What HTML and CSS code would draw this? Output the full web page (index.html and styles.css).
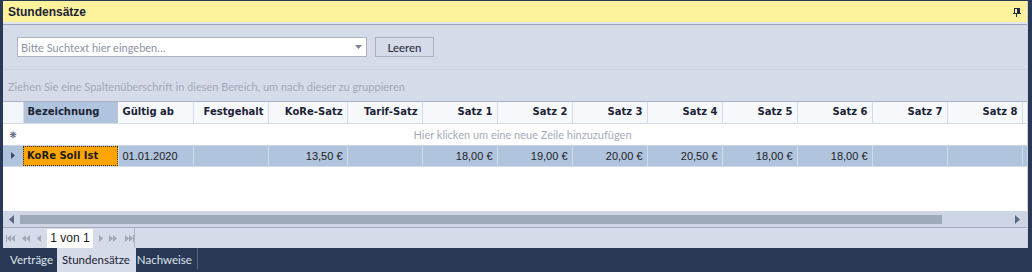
FILE: index.html
```html
<!DOCTYPE html>
<html lang="de">
<head>
<meta charset="utf-8">
<title>Stundensätze</title>
<link rel="stylesheet" href="styles.css">
</head>
<body>
<div class="app">
  <div class="panel">
    <div class="caption">
      <span class="title">Stundensätze</span>
      <svg class="pin" width="8" height="9" viewBox="0 0 8 9">
        <rect x="1.5" y="0.5" width="5" height="5" fill="none" stroke="#1f2b45"/>
        <rect x="4" y="1" width="2" height="4" fill="#1f2b45"/>
        <rect x="0" y="5" width="8" height="1" fill="#1f2b45"/>
        <rect x="3" y="6" width="1" height="3" fill="#1f2b45"/>
      </svg>
    </div>
    <div class="content">
      <div class="search-row">
        <div class="combo">
          <span class="placeholder">Bitte Suchtext hier eingeben…</span>
          <svg class="combo-arrow" width="7" height="4" viewBox="0 0 7 4"><path d="M0 0h7L3.5 4z" fill="#7a8296"/></svg>
        </div>
        <div class="btn">Leeren</div>
      </div>
      <div class="group-panel">Ziehen Sie eine Spaltenüberschrift in diesen Bereich, um nach dieser zu gruppieren</div>
      <div class="grid">
        <div class="grid-scroll">
          <table class="table">
            <colgroup>
              <col class="c-ind"><col class="c-bez"><col class="c-std"><col class="c-std"><col class="c-kore"><col class="c-std">
              <col class="c-std"><col class="c-std"><col class="c-std"><col class="c-std"><col class="c-std"><col class="c-std"><col class="c-std"><col class="c-std"><col class="c-std">
            </colgroup>
            <thead>
              <tr class="head">
                <th class="ind"></th>
                <th class="left sel">Bezeichnung</th>
                <th class="left">Gültig ab</th>
                <th>Festgehalt</th>
                <th>KoRe-Satz</th>
                <th>Tarif-Satz</th>
                <th>Satz 1</th>
                <th>Satz 2</th>
                <th>Satz 3</th>
                <th>Satz 4</th>
                <th>Satz 5</th>
                <th>Satz 6</th>
                <th>Satz 7</th>
                <th>Satz 8</th>
                <th></th>
              </tr>
            </thead>
            <tbody>
              <tr class="newrow">
                <td class="ind"><span class="star">❋</span></td>
                <td colspan="13" class="newtext">Hier klicken um eine neue Zeile hinzuzufügen</td>
                <td></td>
              </tr>
              <tr class="datarow">
                <td class="ind"><svg width="4" height="7" viewBox="0 0 4 7"><path d="M0 0l4 3.5L0 7z" fill="#3d4a66"/></svg></td>
                <td class="left focus"><span class="focus-box">KoRe Soll Ist</span></td>
                <td class="left">01.01.2020</td>
                <td></td>
                <td>13,50 €</td>
                <td></td>
                <td>18,00 €</td>
                <td>19,00 €</td>
                <td>20,00 €</td>
                <td>20,50 €</td>
                <td>18,00 €</td>
                <td>18,00 €</td>
                <td></td>
                <td></td>
                <td></td>
              </tr>
            </tbody>
          </table>
        </div>
        <div class="hscroll">
          <svg class="sarrow" width="5" height="9" viewBox="0 0 5 9"><path d="M5 0v9L0 4.5z" fill="#5b6884"/></svg>
          <div class="track"><div class="thumb"></div></div>
          <svg class="sarrow" width="5" height="9" viewBox="0 0 5 9"><path d="M0 0v9l5-4.5z" fill="#5b6884"/></svg>
        </div>
      </div>
      <div class="navigator">
        <div class="nav-box">
          <svg class="nav-ico" width="10" height="7" viewBox="0 0 10 7"><path d="M0 0h1v7H0zM1 3.5L5 0v7zM5 3.5L9 0v7z" fill="#9ea8ba"/></svg>
          <svg class="nav-ico" width="9" height="7" viewBox="0 0 9 7"><path d="M0 3.5L4 0v7zM4 3.5L8 0v7z" fill="#9ea8ba"/></svg>
          <svg class="nav-ico" width="4" height="7" viewBox="0 0 4 7"><path d="M0 3.5L4 0v7z" fill="#9ea8ba"/></svg>
          <span class="page">1 von 1</span>
          <svg class="nav-ico" width="4" height="7" viewBox="0 0 4 7"><path d="M4 3.5L0 0v7z" fill="#9ea8ba"/></svg>
          <svg class="nav-ico" width="9" height="7" viewBox="0 0 9 7"><path d="M8 3.5L4 0v7zM4 3.5L0 0v7z" fill="#9ea8ba"/></svg>
          <svg class="nav-ico" width="10" height="7" viewBox="0 0 10 7"><path d="M9 0h1v7H9zM9 3.5L5 0v7zM5 3.5L1 0v7z" fill="#9ea8ba"/></svg>
        </div>
      </div>
    </div>
  </div>
  <div class="tabs">
    <div class="tab">Verträge</div>
    <div class="tab active">Stundensätze</div>
    <div class="tab">Nachweise</div>
  </div>
</div>
</body>
</html>
```

FILE: styles.css
```css
* { box-sizing: border-box; }
html, body { margin: 0; padding: 0; }
body {
  background: #293955;
  width: 1032px;
  height: 272px;
  overflow: hidden;
  font-family: "Lato", "Liberation Sans", sans-serif;
}
.app {
  display: flex;
  flex-direction: column;
  height: 272px;
  padding-top: 1px;
}
.panel {
  margin-left: 3px;
  width: 1025px;
  border-right: 1px solid #c9d0e0;
  display: flex;
  flex-direction: column;
  background: #d5dbe8;
}
.caption {
  height: 21px;
  background: #fff29d;
  display: flex;
  align-items: center;
  justify-content: space-between;
  padding: 0 6px 0 5px;
}
.title {
  font-family: "Liberation Sans", sans-serif;
  font-weight: bold;
  font-size: 12px;
  color: #1b2235;
}
.pin { margin-top: 1px; }
.content {
  border-top: 2px solid #e0e4ef;
}
.content::before {
  content: "";
  display: block;
  height: 1px;
  background: #9ea5bd;
}
.search-row {
  display: flex;
  gap: 8px;
  padding: 12px 0 0 14px;
}
.combo {
  width: 350px;
  height: 20px;
  background: #fff;
  border: 1px solid #abb3c5;
  display: flex;
  align-items: center;
  justify-content: space-between;
  padding: 0 4px 0 3px;
}
.placeholder {
  font-size: 11px;
  color: #8c93a6;
  white-space: nowrap;
}
.btn {
  width: 59px;
  height: 20px;
  border: 1px solid #a9b1c3;
  background: #d5dbe8;
  font-size: 11.5px;
  color: #1e2538;
  display: flex;
  align-items: center;
  justify-content: center;
}
.group-panel {
  margin-top: 12px;
  border-top: 1px solid #cbd1de;
  height: 32px;
  padding: 10px 0 0 5px;
  font-size: 11px;
  color: #a2a9bb;
  white-space: nowrap;
}
.grid {
  background: #fff;
  border-top: 1px solid #a8b0c2;
  height: 127px;
  display: flex;
  flex-direction: column;
  border-bottom: 1px solid #a3abbd;
}
.grid-scroll {
  flex: 1;
  overflow: hidden;
}
.table {
  border-collapse: collapse;
  table-layout: fixed;
  width: 1094px;
  font-family: "Liberation Sans", sans-serif;
  font-size: 11px;
  color: #1c1c1c;
}
.c-ind { width: 20px; }
.c-bez { width: 95px; }
.c-std { width: 75px; }
.c-kore { width: 79px; }
.table th, .table td {
  padding: 0 4px;
  text-align: right;
  white-space: nowrap;
  overflow: hidden;
}
.table .left { text-align: left; }
.head th {
  height: 21px;
  background: #f6f8fc;
  border-right: 1px solid #d5dbe8;
  border-bottom: 1px solid #d5dbe8;
  font-family: "DejaVu Sans", sans-serif;
  font-weight: bold;
  font-size: 10px;
  color: #1b2235;
  padding-bottom: 1px;
}
.head th.sel { background: #b1c4de; border-right: 1px solid #fff; }
.head th.ind { background: #f2f5fa; }
.newrow td {
  height: 22px;
  border-bottom: 1px solid #c9d3e4;
  padding: 0;
}
.newrow .newtext {
  text-align: center;
  font-family: "Lato", sans-serif;
  font-size: 11px;
  color: #a3abbd;
}
.ind { text-align: center !important; padding: 0 !important; }
.star { font-family: "DejaVu Sans", sans-serif; font-size: 9px; color: #4b5772; }
.datarow td {
  height: 21px;
  background: #b1c4de;
  border-right: 1px solid #d2dbe9;
  border-bottom: 1px solid #d2dbe9;
}
.datarow td.ind { border-right: none; }
.datarow td.ind svg { display: block; margin: 0 auto; }
.datarow td.focus {
  padding: 0;
  background: #ffa500;
}
.focus-box {
  display: flex;
  align-items: center;
  height: 20px;
  border: 1px dotted #3a2a00;
  padding-left: 3px;
  font-family: "DejaVu Sans", sans-serif;
  font-weight: bold;
  font-size: 10px;
  color: #1b1b1b;
}
.hscroll {
  height: 16px;
  background: #ced6e6;
  display: flex;
  align-items: center;
  padding: 0 7px 0 6px;
  gap: 6px;
}
.track {
  flex: 1;
  height: 9px;
}
.thumb {
  width: 922px;
  height: 9px;
  background: #9ea9b9;
}
.navigator {
  height: 20px;
  display: flex;
}
.nav-box {
  width: 132px;
  display: flex;
  align-items: center;
  gap: 6px;
  padding-left: 3px;
  border-right: 1px solid #aeb6c7;
}
.page {
  background: #fff;
  height: 19px;
  width: 46px;
  display: flex;
  align-items: center;
  justify-content: center;
  font-family: "Liberation Sans", sans-serif;
  font-size: 12px;
  color: #1b1b1b;
}
.tabs {
  display: flex;
  height: 24px;
  padding-left: 3px;
}
.tab {
  font-size: 11.5px;
  color: #dfe4ee;
  display: flex;
  align-items: center;
  padding: 0 4px 2px 7px;
  height: 24px;
}
.tab.active {
  background: #d5dbe8;
  color: #1b2235;
  margin-left: 0;
  padding-left: 5px;
  padding-right: 6px;
}
.tab:last-child {
  padding-left: 1px;
  padding-right: 5px;
  border-right: 1px solid #5b6780;
  height: 21px;
  padding-top: 2px;
  padding-bottom: 0;
}
```
